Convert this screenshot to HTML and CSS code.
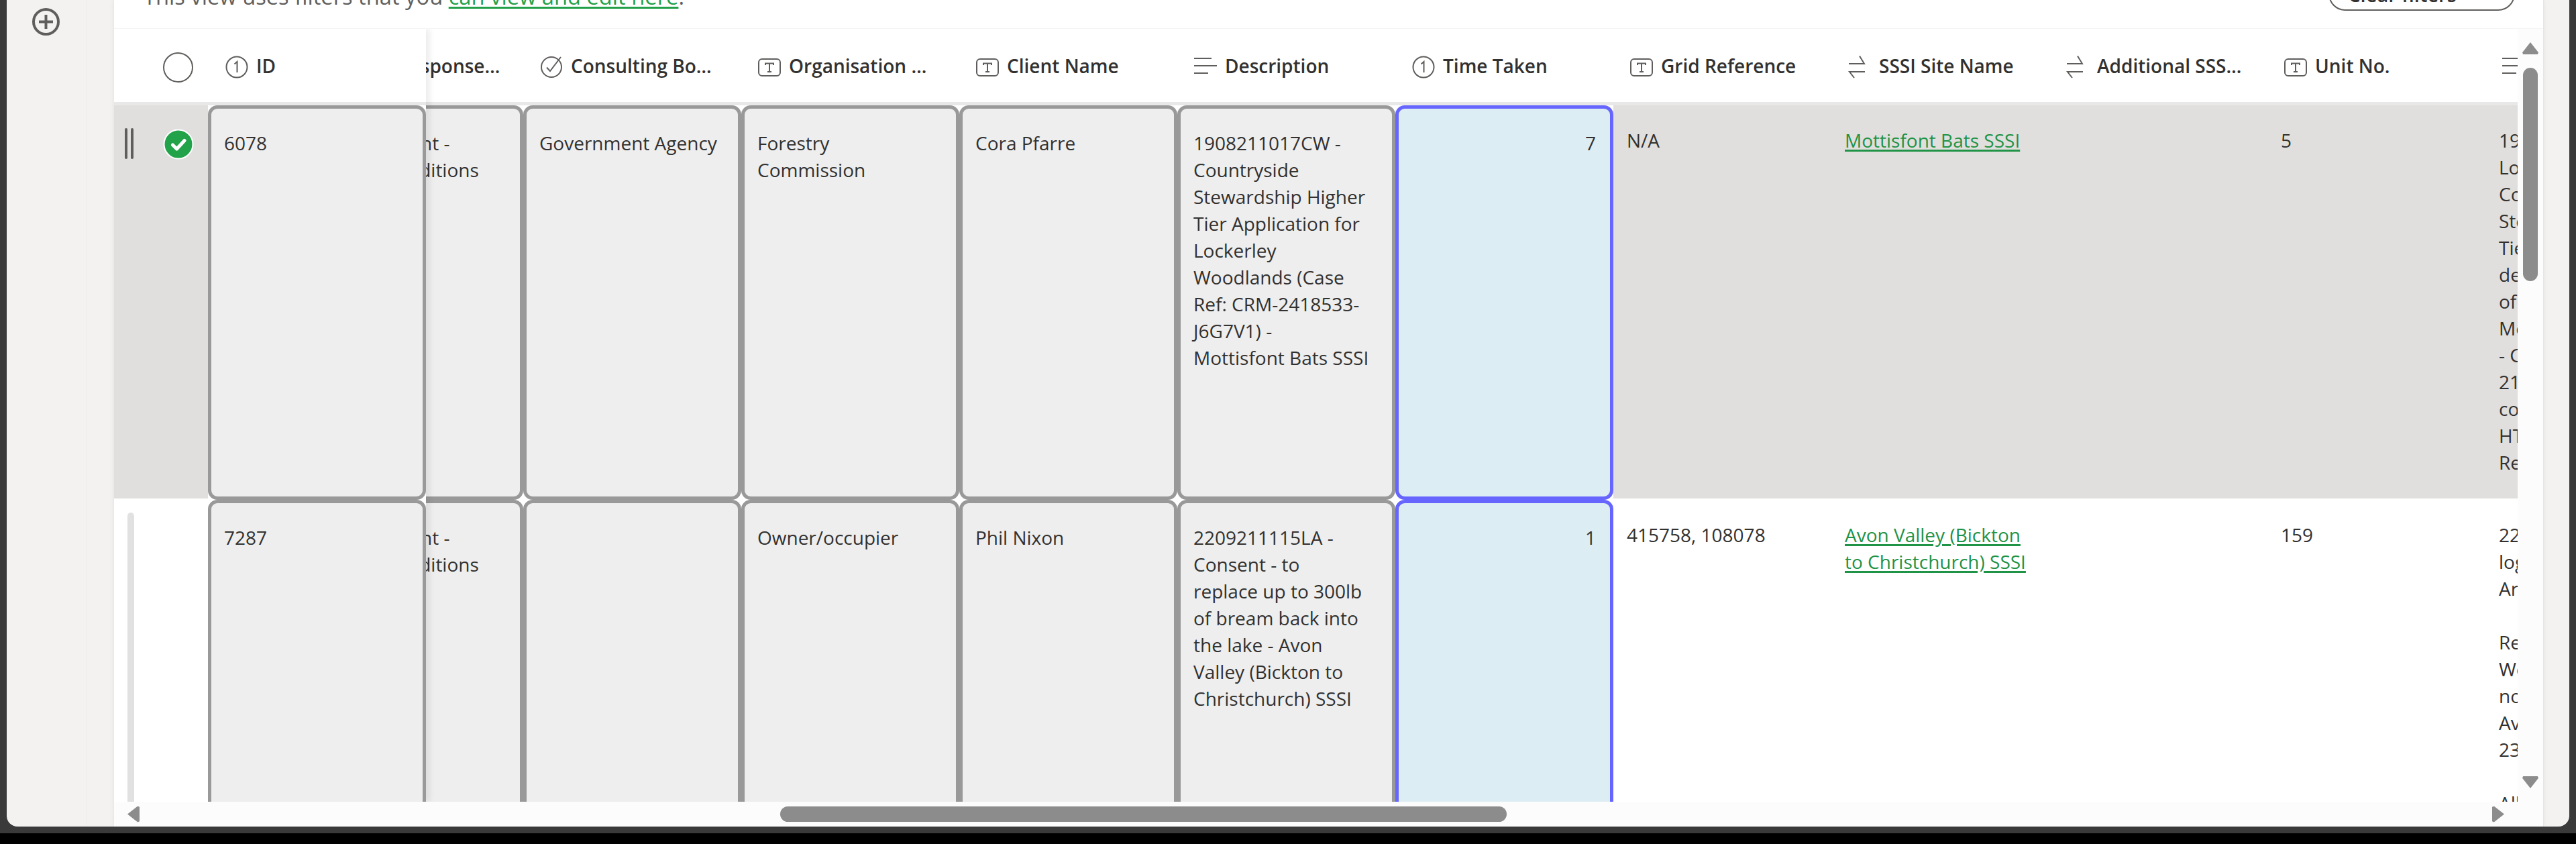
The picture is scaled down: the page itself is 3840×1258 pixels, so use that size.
FILE: index.html
```html
<!DOCTYPE html>
<html lang="en">
<head>
<meta charset="UTF-8">
<title>Casework view</title>
<link rel="stylesheet" href="styles.css">
</head>
<body>
<svg class="defs" width="0" height="0">
  <symbol id="i-number" viewBox="0 0 34 34"><circle cx="17" cy="17" r="15.5"/><path d="M13.5 12.5 17.5 9V25"/></symbol>
  <symbol id="i-check" viewBox="0 0 34 34"><circle cx="17" cy="17" r="15"/><path d="M10 17.5 15 23 31 2"/></symbol>
  <symbol id="i-text" viewBox="0 0 34 34"><rect x="1" y="5" width="32" height="25" rx="5"/><path d="M11 14V11.500H23V14M17 11.500V24M14 24H20"/></symbol>
  <symbol id="i-lines" viewBox="0 0 34 34"><path d="M0 4H26M0 15H34M0 26H21"/></symbol>
  <symbol id="i-lookup" viewBox="0 0 34 34"><path d="M1 12H24L17 .5M25 24H2L9 33"/></symbol>
</svg>

<div class="page">
  <div class="window">
    <aside class="sidebar">
      <div class="rail">
        <svg class="plus" viewBox="0 0 41 41"><circle cx="20.500" cy="20.500" r="18.500"/><path d="M10 20.500H31M20.500 10V31"/></svg>
      </div>
    </aside>

    <main class="panel">
      <div class="filter-bar">
        <p class="filter-note">This view uses filters that you <a href="#">can view and edit here</a>.</p>
        <button class="clear-btn">Clear filters</button>
      </div>

      <div class="table">
        <div class="frozen">
          <div class="head-row">
            <div class="head-gutter"><span class="select-ring"></span></div>
            <div class="head-cell head-id"><svg class="icon"><use href="#i-number"/></svg>ID</div>
          </div>
          <div class="row row-a">
            <div class="gutter is-selected">
              <span class="handle"><i></i><i></i></span>
              <svg class="tick" viewBox="0 0 46 46"><circle cx="23" cy="23" r="21.500"/><path d="M14.500 24 20.500 30 32 17.500"/></svg>
            </div>
            <div class="cell edit">6078</div>
          </div>
          <div class="row row-b">
            <div class="gutter"><span class="handle-idle"></span></div>
            <div class="cell edit">7287</div>
          </div>
        </div>

        <div class="scroll">
          <div class="scroll-inner">
            <div class="head-row">
              <div class="head-cell"><svg class="icon"><use href="#i-text"/></svg>First Response…</div>
              <div class="head-cell"><svg class="icon"><use href="#i-check"/></svg>Consulting Bo…</div>
              <div class="head-cell"><svg class="icon"><use href="#i-text"/></svg>Organisation …</div>
              <div class="head-cell"><svg class="icon"><use href="#i-text"/></svg>Client Name</div>
              <div class="head-cell"><svg class="icon"><use href="#i-lines"/></svg>Description</div>
              <div class="head-cell"><svg class="icon"><use href="#i-number"/></svg>Time Taken</div>
              <div class="head-cell"><svg class="icon"><use href="#i-text"/></svg>Grid Reference</div>
              <div class="head-cell"><svg class="icon"><use href="#i-lookup"/></svg>SSSI Site Name</div>
              <div class="head-cell"><svg class="icon"><use href="#i-lookup"/></svg>Additional SSS…</div>
              <div class="head-cell"><svg class="icon"><use href="#i-text"/></svg>Unit No.</div>
              <div class="head-cell"><svg class="icon"><use href="#i-lines"/></svg>Notes</div>
            </div>

            <div class="row row-a">
              <div class="cell edit">With Consent -<br>or with conditions</div>
              <div class="cell edit">Government Agency</div>
              <div class="cell edit">Forestry<br>Commission</div>
              <div class="cell edit">Cora Pfarre</div>
              <div class="cell edit">1908211017CW -<br>Countryside<br>Stewardship Higher<br>Tier Application for<br>Lockerley<br>Woodlands (Case<br>Ref: CRM-2418533-<br>J6G7V1) -<br>Mottisfont Bats SSSI</div>
              <div class="cell edit active num">7</div>
              <div class="cell is-selected">N/A</div>
              <div class="cell is-selected"><a href="#">Mottisfont Bats SSSI</a></div>
              <div class="cell is-selected"></div>
              <div class="cell is-selected">5</div>
              <div class="cell is-selected">1908211017CW -<br>Lockerley Woodlands<br>Countryside<br>Stewardship Higher<br>Tier Application<br>details<br>of the proposal<br>Mottisfont Bats<br>- CRM-2418533<br>21 days<br>consultation<br>HTML<br>Response</div>
            </div>

            <div class="row row-b">
              <div class="cell edit">With Consent -<br>or with conditions</div>
              <div class="cell edit"></div>
              <div class="cell edit">Owner/occupier</div>
              <div class="cell edit">Phil Nixon</div>
              <div class="cell edit">2209211115LA -<br>Consent - to<br>replace up to 300lb<br>of bream back into<br>the lake - Avon<br>Valley (Bickton to<br>Christchurch) SSSI</div>
              <div class="cell edit active num">1</div>
              <div class="cell">415758, 108078</div>
              <div class="cell"><a href="#">Avon Valley (Bickton<br>to Christchurch) SSSI</a></div>
              <div class="cell"></div>
              <div class="cell">159</div>
              <div class="cell">2209211115LA -<br>logged for<br>Area team<br><br>Received by<br>Wessex team<br>no objection<br>Avon Valley<br>23 days<br><br>All done</div>
            </div>
          </div>
        </div>

        <div class="vscroll">
          <span class="arrow arrow-up"></span>
          <span class="vthumb"></span>
          <span class="arrow arrow-down"></span>
        </div>
      </div>

      <div class="hscroll">
        <span class="arrow arrow-left"></span>
        <span class="hthumb"></span>
        <span class="arrow arrow-right"></span>
      </div>
    </main>

    <div class="right-gutter"></div>
  </div>
  <div class="taskbar"></div>
</div>
</body>
</html>
```

FILE: styles.css
```css
* {
  box-sizing: border-box;
}

html, body {
  margin: 0;
  height: 100%;
  overflow: hidden;
}

body {
  font-family: "Open Sans", "Liberation Sans", sans-serif;
  font-size: 28px;
  line-height: 40px;
  color: #323130;
  background: #000;
}

a {
  color: #1f9346;
  text-decoration: underline;
  text-decoration-thickness: 3px;
  text-underline-offset: 3px;
}

.defs {
  position: absolute;
}

.page {
  height: 1242px;
  padding: 0 10px 10px;
  background: #3a3a3a;
}

.window {
  display: flex;
  height: 1232px;
  background: #f3f2f1;
  border-radius: 0 0 16px 16px;
  overflow: hidden;
}

.sidebar {
  width: 160px;
  flex: none;
}

.rail {
  width: 120px;
  height: 100%;
  padding: 12px 0 0 38px;
  border-right: 1px solid #ebebea;
}

.plus {
  display: block;
  width: 41px;
  height: 41px;
  fill: none;
  stroke: #605e5c;
  stroke-width: 4;
}

.panel {
  display: flex;
  flex-direction: column;
  width: 3621px;
  flex: none;
  background: #fff;
  box-shadow: 0 0 8px rgba(0, 0, 0, 0.08);
}

.right-gutter {
  flex: 1;
  border-left: 1px solid #e6e6e6;
}

/* filter strip, cut off by the top of the window */
.filter-bar {
  display: flex;
  justify-content: space-between;
  height: 42px;
  padding: 0 42px 0 44px;
  overflow: hidden;
  flex: none;
}

.filter-note {
  margin: -25px 0 0;
  font-size: 32.700px;
  color: #605e5c;
}

.filter-note a {
  color: #22a049;
}

.clear-btn {
  width: 278px;
  height: 50px;
  margin-top: -34px;
  padding: 0 58px 0 0;
  border: 2px solid #605e5c;
  border-radius: 25px;
  background: #fff;
  color: #323130;
  font: 600 29px "Open Sans", sans-serif;
}

.table {
  display: flex;
  height: 1153px;
  flex: none;
  border-top: 1px solid #f5f5f5;
  overflow: hidden;
}

.frozen {
  position: relative;
  z-index: 1;
  width: 465px;
  flex: none;
  background: #fff;
  box-shadow: 6px 0 8px rgba(0, 0, 0, 0.07);
}

.scroll {
  width: 3118px;
  flex: none;
  overflow: hidden;
}

.scroll-inner {
  width: 3575px;
  margin-left: -180px;
}

.head-row {
  display: flex;
  height: 114px;
  border-bottom: 5px solid #e8e8e8;
  background: #fff;
}

.head-gutter {
  display: flex;
  align-items: center;
  width: 140px;
  padding: 6px 0 0 73px;
}

.select-ring {
  width: 45px;
  height: 45px;
  border: 2px solid #605e5c;
  border-radius: 50%;
}

.head-cell {
  display: flex;
  align-items: center;
  width: 325px;
  flex: none;
  padding: 1px 0 0 25px;
  font-weight: 600;
  white-space: nowrap;
}

.head-id {
  padding-left: 26px;
}

.icon {
  width: 34px;
  height: 34px;
  margin: 3px 12px 0 0;
  flex: none;
  fill: none;
  stroke: #605e5c;
  stroke-width: 2;
}

.row {
  display: flex;
  align-items: flex-start;
}

.row-a {
  height: 588px;
}

.row-b {
  height: 600px;
}

.gutter {
  display: flex;
  width: 140px;
  height: 586px;
  flex: none;
  align-items: flex-start;
  padding-left: 16px;
}

.row-b .gutter {
  padding: 19px 0 0 20px;
  height: 100%;
}

.is-selected {
  background: #e0dfdd;
}

.handle {
  display: flex;
  gap: 5px;
  margin-top: 34px;
}

.handle i {
  width: 4px;
  height: 46px;
  border-radius: 2px;
  background: #605e5c;
}

.handle-idle {
  width: 10px;
  height: 100%;
  border-radius: 5px 5px 0 0;
  background: #e1e1e1;
}

.tick {
  width: 46px;
  height: 46px;
  margin: 35px 0 0 44px;
  fill: #22a34a;
  stroke: #fff;
  stroke-width: 2;
}

.tick path {
  fill: none;
  stroke-width: 5;
  stroke-linecap: round;
  stroke-linejoin: round;
}

.cell {
  width: 325px;
  height: 586px;
  flex: none;
  padding: 32px 20px 0;
  white-space: nowrap;
  overflow: hidden;
}

.row-b .cell {
  height: 600px;
}

.edit {
  height: 588px;
  padding: 31px 21px 0 19px;
  border: 5px solid #999;
  border-radius: 14px;
  background: #eee;
}

.active {
  border-color: #6666ff;
  background: #ddedf4;
}

.num {
  text-align: right;
}

/* scrollbars */
.vscroll {
  display: flex;
  flex: 1;
  flex-direction: column;
  align-items: center;
  padding: 20px 0;
  background: #fcfcfc;
}

.vthumb {
  width: 22px;
  height: 318px;
  margin-top: 20px;
  border-radius: 11px;
  background: #8c8c8c;
}

.arrow {
  flex: none;
  background: #8c8c8c;
}

.arrow-up {
  width: 24px;
  height: 18px;
  clip-path: polygon(50% 0, 100% 85%, 95% 100%, 5% 100%, 0 85%);
}

.arrow-down {
  width: 24px;
  height: 18px;
  margin-top: auto;
  clip-path: polygon(5% 0, 95% 0, 100% 15%, 50% 100%, 0 15%);
}

.arrow-left {
  width: 18px;
  height: 24px;
  clip-path: polygon(0 50%, 85% 0, 100% 5%, 100% 95%, 85% 100%);
}

.arrow-right {
  width: 18px;
  height: 24px;
  margin-left: auto;
  clip-path: polygon(0 5%, 15% 0, 100% 50%, 15% 100%, 0 95%);
}

.hscroll {
  display: flex;
  align-items: center;
  height: 37px;
  flex: none;
  padding: 0 58px 0 20px;
  background: #fcfcfc;
}

.hthumb {
  width: 1083px;
  height: 23px;
  margin-left: 955px;
  border-radius: 12px;
  background: #8c8c8c;
}
```
